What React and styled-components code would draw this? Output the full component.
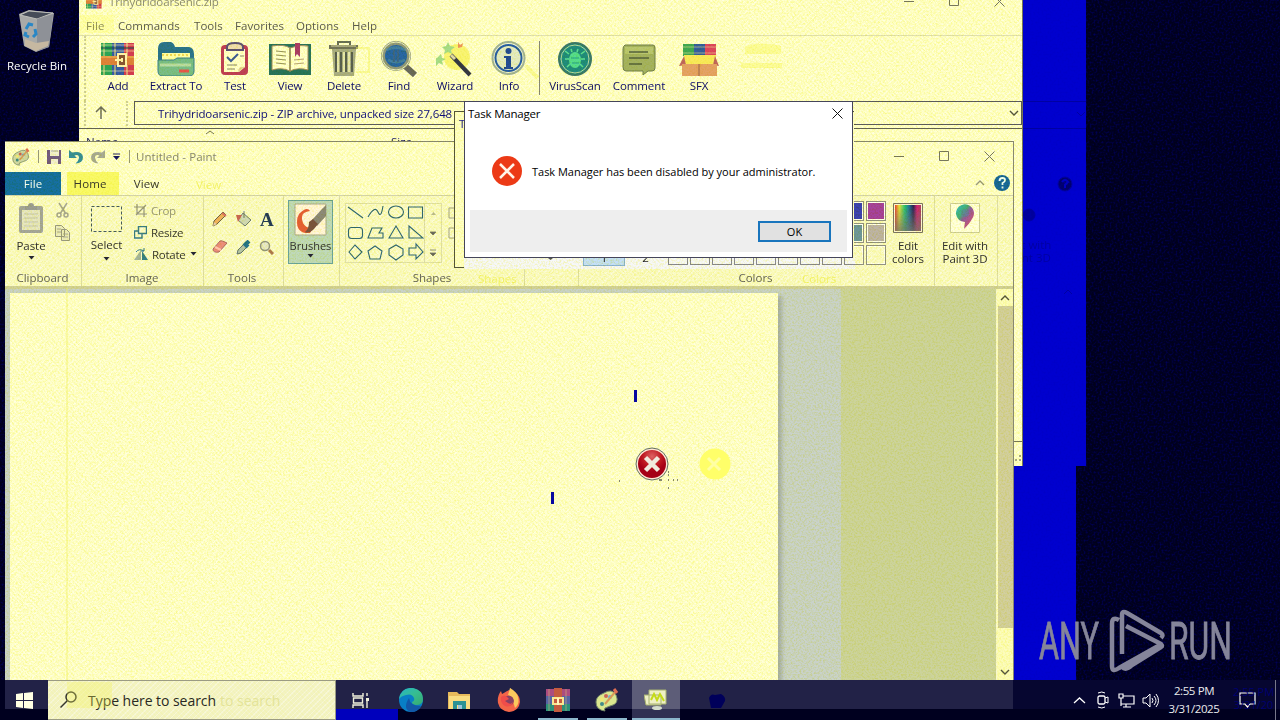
import React from "react";
import styled, { createGlobalStyle, css } from "styled-components";

const Global = createGlobalStyle`
  * { box-sizing: border-box; }
  html, body { margin: 0; padding: 0; overflow: hidden; background: #00001c; }
  body { font-family: "Open Sans", "Noto Sans", sans-serif; font-size: 11.5px; color: #30302c; }
`;

const dither = css`
  background-image:
    repeating-linear-gradient(45deg, rgba(240,240,90,.1) 0 1px, transparent 1px 3px),
    repeating-linear-gradient(-45deg, rgba(255,255,255,.35) 0 1px, transparent 1px 4px);
`;

const Desktop = styled.main`
  position: relative; width: 1280px; height: 720px; overflow: hidden;
  background-color: #00001c;
`;
const BlueTrail = styled.div`
  position: absolute; left: ${p => p.$x}px; top: ${p => p.$y}px;
  width: ${p => p.$w}px; height: ${p => p.$h}px; background: #0000cf;
`;
const Texture = styled.svg`
  position: absolute; left: 0; top: 0; pointer-events: none; mix-blend-mode: ${p => p.$blend || "normal"};
`;
const Ghost = styled.div`
  position: absolute; left: ${p => p.$x}px; top: ${p => p.$y}px; white-space: pre;
  line-height: 13px; text-align: center; color: ${p => p.$c || "#f3f36c"};
  font-size: ${p => p.$s || 11.5}px;
`;
const Patch = styled.div`
  position: absolute; left: ${p => p.$x}px; top: ${p => p.$y}px;
  width: ${p => p.$w}px; height: ${p => p.$h}px; background: ${p => p.$c};
`;
const DesktopIcon = styled.div`
  position: absolute; left: 4px; top: 8px; width: 66px; display: flex; flex-direction: column;
  align-items: center; gap: 5px; color: #fff; line-height: 14px; white-space: nowrap;
  font-size: 11.5px; letter-spacing: 0;
`;

/* Archive window */
const ArchiveWindow = styled.section`
  position: absolute; left: 79px; top: -14px; width: 944px; height: 480px;
  background-color: #ffffce; ${dither}
  display: flex; flex-direction: column; border-right: 1px solid #77775c;
`;
const ArchiveTitle = styled.header`
  height: 31px; display: flex; align-items: center; padding: 0 17px 1px 7px; gap: 7px; color: #8d8d78;
  letter-spacing: -.12px;
`;
const Spacer = styled.div`flex: 1;`;
const Caption = styled.div`display: flex; gap: 34px; align-items: center;`;
const Menu = styled.nav`height: 19px; display: flex; padding-left: 7px; line-height: 18px; border-bottom: 1px solid #e0e0b5; color: #5c5c50;`;
const MenuItem = styled.span`width: ${p => p.$w}px; letter-spacing: .05px; white-space: nowrap;`;
const Tools = styled.div`height: 65px; display: flex; margin-left: 5px; padding: 5px 0 0 3px; border-left: 2px dotted #d0d09e;`;
const Tool = styled.div`
  width: ${p => p.$w}px; display: flex; flex-direction: column; align-items: center; gap: 1px;
  color: #0c0c6c; line-height: 15px; white-space: nowrap; height: 60px; letter-spacing: -.1px;
`;
const ToolRule = styled.i`width: 1px; height: 54px; background: #88887a; margin: 0 0 0 6px;`;
const AddressRow = styled.div`height: 27px; display: flex; padding-left: 5px;`;
const UpButton = styled.div`
  width: 44px; height: 25px; margin-right: 6px; border-left: 2px dotted #d0d09e; border-right: 2px dotted #d0d09e;
  display: flex; align-items: center; padding: 0 0 2px 9px;
`;
const Address = styled.div`
  flex: 1; height: 24px; border: 1px solid #5b5b60; display: flex; align-items: center;
  justify-content: space-between; padding: 0 2px 0 23px; color: #101080; white-space: nowrap; letter-spacing: -.12px;
`;
const ListHead = styled.div`
  height: 14px; border-top: 1px solid #626258; display: flex; overflow: hidden; padding: 5px 0 0 7px;
  line-height: 15px; color: #222260;
`;
const Column = styled.span`width: ${p => p.$w}px;`;

/* Paint window */
const PaintWindow = styled.section`
  position: absolute; left: 5px; top: 141px; width: 1009px; height: 539px;
  background-color: #ffffce; ${dither}
  border: 1px solid #888871; border-left: 0; border-bottom: 0; display: flex; flex-direction: column;
`;
const PaintTitle = styled.header`
  height: 30px; display: flex; align-items: center; padding: 0 18px 1px 7px; color: #888874; letter-spacing: .05px;
`;
const Quick = styled.div`display: flex; align-items: center; width: 124px; gap: 8px; white-space: nowrap;`;
const PaintCaption = styled.div`display: flex; align-items: center; gap: 34px;`;
const Tabs = styled.nav`height: 23px; display: flex; align-items: stretch; line-height: 23px; letter-spacing: .1px;`;
const Tab = styled.div`
  width: ${p => p.$w}px; text-align: center; margin-right: ${p => p.$gap || 0}px;
  padding-right: ${p => p.$kind === "on" ? 6 : 0}px;
  background: ${p => p.$kind === "file" ? "#166fa5" : p.$kind === "on" ? "#f9f96a" : "transparent"};
  color: ${p => p.$kind === "file" ? "#f6ffff" : "#38382c"};
`;
const HelpRow = styled.div`display: flex; align-items: center; gap: 9px; padding: 0 3px 2px 0;`;
const Ribbon = styled.div`
  height: 94px; display: flex; background-color: #fafac8; ${dither}
  border-top: 1px solid #d3d3ae; border-bottom: 3px solid #d0d09c;
`;
const Group = styled.div`
  width: ${p => p.$w}px; padding-top: 3px; display: flex; flex-direction: column;
  border-right: 1px solid #dedeab; flex: none;
`;
const GroupBody = styled.div`height: 72px; display: flex; padding-left: ${p => p.$pad || 0}px;`;
const GroupName = styled.div`text-align: center; line-height: 14px; color: #65655a; white-space: nowrap; padding-right: ${p => p.$shift || 0}px;`;
const BigButton = styled.div`
  width: ${p => p.$w}px; display: flex; flex-direction: column; align-items: center; line-height: 13px;
  padding-top: ${p => p.$top || 0}px; gap: ${p => p.$gap || 4}px; white-space: pre-line; text-align: center; letter-spacing: -.05px;
`;
const Pair = styled.div`width: 24px; display: flex; flex-direction: column; gap: 7px; align-items: center; padding-top: 3px;`;
const SmallList = styled.div`display: flex; flex-direction: column; margin-left: 7px;`;
const Small = styled.div`height: 22px; display: flex; align-items: center; gap: 4px; color: ${p => p.$off ? "#98987d" : "#38382c"}; white-space: nowrap; letter-spacing: -.25px;`;
const ToolGrid = styled.div`display: grid; grid-template-columns: repeat(3, 23.5px); grid-auto-rows: 28px; padding-top: 6px; place-items: center;`;
const BrushButton = styled.div`
  width: 45px; height: 64px; margin-top: 1px; border: 1px solid #6aa3a5; background: #bfd9bc;
  display: flex; flex-direction: column; align-items: center; padding-top: 2px; line-height: 13px; gap: 2px; font-size: 11px;
`;
const ShapeBox = styled.div`width: 97px; height: 60px; margin-top: 4px; border: 1px solid #e0e0ac; display: flex;`;
const Palette = styled.div`display: grid; grid-template-columns: repeat(10, 22px); grid-auto-rows: 22px; margin-left: 2px; padding-top: 2px;`;
const Swatch = styled.i`width: 20px; height: 20px; border: 1px solid #929284; background: ${p => p.$c}; box-shadow: inset 0 0 0 1px #fffff0;`;
const ColorSlot = styled.div`width: 42px; height: 66px;`;
const Workspace = styled.div`flex: 1; display: flex; background: linear-gradient(90deg, #c9d2cb 0 836px, #ccd39e 836px);`;
const Canvas = styled.div`
  width: 768px; margin: 4px 0 0 5px; background-color: #ffffd2; ${dither} box-shadow: 4px 3px 4px #a8b0aa;
`;
const Scroll = styled.div`
  width: 17px; display: flex; flex-direction: column; align-items: center; background: #fcfcbd; border-left: 1px solid #f8f8ce;
`;
const ScrollEnd = styled.div`height: 17px; display: flex; align-items: center;`;
const Thumb = styled.div`height: 322px; width: 15px; background: #d2cfa0;`;

/* Dialogs */
const BackDialog = styled.div`
  position: absolute; left: 454px; top: 111px; width: 400px; height: 157px;
  border: 1px solid #56563c; border-right: 0; background: #ffffc9; padding: 4px 4px; color: #20208a; line-height: 15px;
`;
const RibbonStrip = styled.div`
  position: absolute; left: 464px; top: 258px; width: 391px; height: 11px; overflow: hidden;
  background: #f6f7fb; display: flex; align-items: flex-start; padding-left: 84px;
`;
const StripArrow = styled.i`width: 5px; height: 2px; flex: none; margin: 0 30px 0 0; background: #555; clip-path: polygon(0 0, 100% 0, 50% 100%);`;
const StripSlot = styled.div`
  width: ${p => p.$on ? 42 : 41}px; flex: none; height: 8px; border: 1px solid ${p => p.$on ? "#8ab3da" : "transparent"}; border-top: 0;
  background: ${p => p.$on ? "#c4dffa" : "transparent"}; display: flex; justify-content: center; line-height: 4px; color: #222; overflow: hidden;
`;
const StripDigit = styled.span`margin-top: -2px;`;
const StripSwatch = styled.i`width: 20px; height: 7px; margin-left: 2px; flex: none; border: 1px solid #898991; border-top: 0;`;
const Dialog = styled.section`
  position: absolute; left: 464px; top: 101px; width: 389px; height: 157px; background: #fff;
  border: 1px solid #45455a; color: #000; display: flex; flex-direction: column;
`;
const DialogTitle = styled.header`height: 24px; display: flex; justify-content: space-between; align-items: center; padding: 0 9px 1px 3px; letter-spacing: -.22px;`;
const DialogBody = styled.div`height: 84px; display: flex; align-items: center; padding: 5px 0 0 27px; gap: 10px; white-space: nowrap; font-size: 11px;`;
const DialogText = styled.span`padding-top: 1px; letter-spacing: -.02px;`;
const DialogFoot = styled.footer`margin: 0 5px; height: 42px; background: #eee; display: flex; justify-content: flex-end; padding: 11px 16px 0 0;`;
const Ok = styled.button`width: 73px; height: 21px; border: 2px solid #1975bd; background: #e1e1e1; font: 11px "Open Sans", sans-serif; padding: 0; color: #000;`;

/* Taskbar */
const Taskbar = styled.footer`
  position: absolute; left: 0; top: 680px; width: 1280px; height: 40px; display: flex;
  background: linear-gradient(90deg, transparent 0 336px, #0000bc 336px 398px, transparent 398px) 0 29px / 1280px 11px no-repeat,
    linear-gradient(90deg, #000020 0 5px, #222247 5px 1013px, #060630 1013px) 0 0 / 1280px 29px no-repeat, #00001f;
`;
const Start = styled.div`width: 48px; padding-left: 16px; display: flex; align-items: center;`;
const Search = styled.div`
  width: 288px; background-color: #f3f3c2; ${dither} border: 1px solid #9b9b83; border-left: 0;
  display: flex; align-items: center; gap: 10px; padding-left: 12px; font-size: 14px; color: #292922; letter-spacing: -.04px;
`;
const TaskItem = styled.div`
  width: ${p => p.$w || 49}px; display: flex; align-items: center; justify-content: center;
  background: ${p => p.$on ? "linear-gradient(#5d5d78 0 29px,#303052 29px)" : "transparent"};
  box-shadow: ${p => p.$run ? "inset 0 -2px #8cb7cc" : "none"};
  margin: 0 ${p => p.$m || 0}px;
`;
const Tray = styled.div`display: flex; align-items: center; gap: 7px; color: #ebebed;`;
const Clock = styled.div`width: 56px; text-align: center; line-height: 18px; font-size: 11.5px; margin: 0 10px 0 0; white-space: nowrap; letter-spacing: -.4px;`;
const ShowDesktop = styled.i`width: 1px; height: 40px; background: #77778b; margin-left: 19px;`;
const Gap = styled.div`width: 4px; flex: none;`;
const Watermark = styled.svg`position: absolute; left: 1036px; top: 608px;`;
const Overlay = styled.svg`position: absolute; left: ${p => p.$x}px; top: ${p => p.$y}px;`;

const Svg = ({ w = 16, h = w, v = `0 0 ${w} ${h}`, children }) => (
  <svg width={w} height={h} viewBox={v} fill="none" style={{ flexShrink: 0, display: "block" }}>{children}</svg>
);
const Chevron = ({ up, c = "#55553e", w = 10 }) => <Svg w={w} h={6} v="0 0 10 6"><path d={up ? "M1 5 5 1 9 5" : "M1 1 5 5 9 1"} stroke={c} strokeWidth="1.4" /></Svg>;
const Arrow = () => <Svg w={7} h={4}><path d="M.5 0h6L3.5 3.5z" fill="#252535" /></Svg>;
const QuickArrow = () => <Svg w={8} h={8}><path d="M0 1h7" stroke="#252565" /><path d="M0 3h7L3.500 7z" fill="#151565" /></Svg>;
const Divider = () => <Svg w={1} h={13}><path d="M0 0h1v13H0z" fill="#999981" /></Svg>;
const Min = ({ c = "#777760" }) => <Svg w={11}><path d="M0 5.5h10" stroke={c} /></Svg>;
const Max = ({ c = "#777760" }) => <Svg w={11}><path d="M.5.5h9v9h-9z" stroke={c} /></Svg>;
const Close = ({ c = "#77776a" }) => <Svg w={11}><path d="m.5.5 10 10m0-10-10 10" stroke={c} /></Svg>;

const Books = ({ w = 34 }) => (
  <Svg w={w} v="0 0 34 34">
    <path d="M0 1h11v32H0z" fill="#2da45b" /><path d="M11 1h12v32H11z" fill="#365cae" /><path d="M23 1h10v32H23z" fill="#d33c55" />
    <path d="M3 1v32M14 1v32M26 1v32" stroke="#e5d98b" strokeWidth="2" opacity=".55" />
    <path d="M0 3h33M0 9h33M0 29h33" stroke="#fff5b7" opacity=".6" /><path d="M0 6h33" stroke="#164450" opacity=".5" strokeWidth="2" />
    <path d="M0 14h33v9H0z" fill="#dd823c" /><path d="M0 15h33" stroke="#f4bf63" /><rect x="17" y="12" width="8" height="12" stroke="#fff3b0" strokeWidth="2" fill="#885533" />
    <path d="M14 18h7M21 16v4" stroke="#fff3b0" strokeWidth="2" />
  </Svg>
);
const Folder = () => <Svg w={38} h={34}><path d="M1 7q0-7 6-7h7q3 1 4 5h14q5 1 5 7v15H1z" fill="#2a7391" /><path d="M5 11h28v10H5z" fill="#ffffab" /><path d="M5 13h28" stroke="#f1d95a" strokeDasharray="2 2" strokeWidth="2" /><path d="M1 18h16l3-2h17v13q0 5-5 5H6q-5 0-5-5z" fill="#79bd8b" stroke="#3b8090" /><path d="M3 23h31" stroke="#b9dcab" strokeWidth="3" /><path d="M22 29h10" stroke="#e4574e" strokeWidth="3" /></Svg>;
const Clipboard = () => <Svg w={30} h={34}><rect x="1" y="3" width="27" height="30" rx="4" fill="#be4058" /><path d="M4 7h21v18l-6 5H4z" fill="#ffffce" /><path d="M18 30q0-6 7-5" fill="#e2d290" /><path d="M7 5q0-4 8-4t8 4v3H7z" stroke="#5c5279" strokeWidth="2" fill="#eeddb0" /><path d="m7 15 4 4 7-7" stroke="#3d5c9c" strokeWidth="2" /><path d="M7 23h10m-10 4h8m5-13h4" stroke="#89866c" /></Svg>;
const Book = () => <Svg w={44} h={34}><rect x="1" y="2" width="42" height="31" fill="#29745e" /><path d="M4 4q12-2 18 2v23q-8-4-18-1zm18 2q10-4 18-2v24q-10-3-18 1z" fill="#ffffd1" stroke="#a28d60" /><path d="M22 6v24M8 9l10 1M8 13l10 1M8 17l10 1M8 21l10 1" stroke="#95915c" /><path d="M27 1h5v14l-3-3-2 3z" fill="#aa3e69" /><path d="m26 18 10-1m-10 5 10-1" stroke="#b7a376" /></Svg>;
const Trash = ({ desk }) => desk ? (
  <Svg w={40} h={46}><path d="m2 6 10-4 25 3-5 34-13 5L7 38z" fill="#a9aaa8" /><path d="m3 7 17 4 16-6-24-2z" fill="#464c58" stroke="#bfc0ba" /><path d="m20 11 16-5-4 33-12 4z" fill="#8e9197" /><path d="m8 31 11 4 13-2-1 5-12 5-11-5z" fill="#c6b8a1" /><path d="m9 21 3-5 4 1m2 4 1 5-3 3m-4 0-4-2 1-3" stroke="#2a87c6" strokeWidth="3" /></Svg>
) : <Svg w={32} h={36}><path d="M10 4V1h12v3" stroke="#68705a" strokeWidth="2" /><rect x="1" y="4" width="29" height="4" fill="#70735b" /><path d="M4 8h24l-2 27H6z" fill="#a9ad88" /><path d="M8 11v20m5-20v20m5-20v20m6-20v20" stroke="#596052" strokeWidth="2" /><path d="M10 11v20m6-20v20m5-20v20" stroke="#e6e6b1" strokeWidth="2" /><path d="M3 5h25" stroke="#ddddb0" /></Svg>;
const Lens = () => <Svg w={38} h={36}><path d="m25 25 10 9" stroke="#686960" strokeWidth="6" /><circle cx="16" cy="15" r="13" fill="#2866a7" stroke="#90977f" strokeWidth="4" /><circle cx="16" cy="15" r="14" stroke="#ebefbb" strokeWidth="1" /><path d="M6 9q10-5 20 0M8 19q8 4 17 0" stroke="#5690aa" strokeWidth="3" opacity=".6" /><path d="M14 9v12m4-12v12" stroke="#3c668e" strokeWidth="2" /></Svg>;
const Wand = () => <Svg w={38} h={36}><circle cx="21" cy="16" r="13" fill="#f9f476" /><path d="m15 14 19 20" stroke="#343746" strokeWidth="4" /><path d="m15 14 4 4" stroke="#ddd6ac" strokeWidth="3" /><path d="m12 1 2 4 5 1-4 3 1 4-4-2-4 2 1-4-3-3 4-1zM5 13l1 4 4 1-4 2 1 4-4-2-3 3v-5l-3-2 4-1z" fill="#a7dc8c" /><path d="m22 1 2 3 3-2-1 4-4 1z" fill="#ed9661" /></Svg>;
const Info = () => <Svg w={36} h={36}><circle cx="17.5" cy="17" r="16" fill="#f5f8dd" stroke="#a2b39b" strokeWidth="2" /><circle cx="17.5" cy="17" r="13" fill="#e4ebc9" stroke="#285eaa" strokeWidth="2" /><circle cx="17.5" cy="10" r="3" fill="#234c9a" /><path d="M13 15h7v11h2v2h-9v-2h2v-9h-2z" fill="#234c9a" /></Svg>;
const Virus = () => <Svg w={36} h={36}><circle cx="18" cy="18" r="16" fill="#208c81" stroke="#3b786c" strokeWidth="2" /><circle cx="18" cy="18" r="14" stroke="#bad9a7" /><ellipse cx="18" cy="19" rx="6" ry="8" fill="#55dc91" /><path d="m12 13-4-3m4 8H8m5 5-3 3m14-13 4-3m-4 8h4m-5 5 3 3M15 11l-1-3m6 3 1-3" stroke="#60df9a" strokeWidth="1.500" /><path d="M14 17h8m-7 5h7" stroke="#269f8e" /></Svg>;
const CommentIcon = () => <Svg w={36} h={34}><path d="M4 3h28q2 0 2 3v20q0 3-3 3h-4l-5 4v-4H5q-3 0-3-4V7q0-3 2-4z" fill="#a4b263" stroke="#707e4c" /><path d="M4 5h28v7H4z" fill="#c8d480" opacity=".6" /><path d="M8 10h19m-19 6h20M8 22h13" stroke="#54623e" strokeWidth="1.500" /></Svg>;
const Box = () => <Svg w={42} h={35}><path d="M5 2h11v12H5z" fill="#40a857" /><path d="M16 2h11v12H16z" fill="#345ea4" /><path d="M27 2h11v12H27z" fill="#dc4761" /><path d="M5 5h33m-33 6h33" stroke="#eee691" opacity=".55" /><path d="M6 13h32v9H6z" fill="#f8e95e" /><path d="m6 14-5 10 7-1zm31 0 4 10-6-1z" fill="#c06760" /><path d="M4 22h35v12H4z" fill="#e4a268" /><path d="M21 22v12" stroke="#9b6443" /></Svg>;

const PaletteIcon = ({ w = 18, c = "#cfd7a3" }) => <Svg w={w} v="0 0 24 24"><path d="M9 5q8-5 12 2 4 9-6 11l-5 2q-1 2 0 3Q1 22 1 14q0-6 8-9z" fill={c} stroke="#75876a" /><circle cx="7" cy="11" r="2" fill="#f1e775" /><circle cx="11" cy="8" r="2" fill="#cb6657" /><circle cx="15" cy="9" r="2" fill="#78aed3" /><circle cx="7" cy="16" r="2" fill="#438b8a" /><path d="m10 16 11-13" stroke="#d79b59" strokeWidth="2" /><path d="m19 1 3 4" stroke="#de6e53" strokeWidth="3" /></Svg>;
const Save = () => <Svg w={14}><path d="M0 0h14v14H0z" fill="#735c86" /><path d="M3 0h9v6H3zM4 9h7v5H4z" fill="#f1eed4" /><path d="M4 1h7" stroke="#aaa" /></Svg>;
const Undo = ({ flip, c }) => <svg width="14" height="14" viewBox="0 0 14 14" fill="none" style={{ transform: flip ? "scaleX(-1)" : undefined, flexShrink: 0 }}><path d="M0 0v8h8L5.500 5.500Q10 4 10 8q-.5 3-3.500 5.500Q14 13 14 7q-1-6.500-11-4.500z" fill={c} /></svg>;
const Paste = () => <Svg w={26} h={32}><rect x="1" y="3" width="24" height="27" rx="2" fill="#a4a6a0" /><path d="M4 7h18v20H4z" fill="#e6e6c5" /><path d="M7 3h3q0-3 3-3t3 3h3v4H7z" fill="#9b9d97" /><path d="M6 11h14M6 15h14M6 19h14M6 23h14" stroke="#c6c7b5" /></Svg>;
const Cut = () => <Svg w={14} h={16}><path d="m3 1 7 11M11 1 4 12" stroke="#a6a691" strokeWidth="1.5" /><circle cx="3" cy="13" r="2" stroke="#a6a691" strokeWidth="1.5" /><circle cx="10" cy="13" r="2" stroke="#a6a691" strokeWidth="1.5" /></Svg>;
const Copy = () => <Svg w={16} h={17}><path d="M.5.5h6l3 3v8h-9zM6.5 4.5h5l3 3v8h-8z" fill="#ececc0" stroke="#999983" /><path d="M2 4h4M2 7h4m2 2h5m-5 3h5" stroke="#aaaa91" /></Svg>;
const Crop = () => <Svg w={13}><path d="M3 0v10h10M0 3h10v10M2 11 12 1" stroke="#969681" strokeWidth="1.2" /></Svg>;
const Resize = () => <Svg w={13}><path d="M4.5.5h8v7h-8zM4 5H.5v7H8V8" stroke="#397c8d" strokeWidth="1.4" /></Svg>;
const Rotate = () => <Svg w={14} h={13}><path d="M7 2v10H0z" fill="#a4b59f" /><path d="m8 3 6 9H8z" fill="#357f89" /><path d="M2 4q3-4 8-1m0 0V0m0 3H7" stroke="#347c91" /></Svg>;
const Pencil = () => <Svg w={15}><path d="m1 14 1-5L11 0l3 3-9 9z" fill="#efb25e" stroke="#706447" /><path d="m1 14 1-4 3 2z" fill="#e7caaa" /><path d="m10 1 4 3" stroke="#da7468" strokeWidth="2" /></Svg>;
const Bucket = () => <Svg w={17} h={16}><path d="m8 2 8 7-6 6-7-6z" fill="#d0d8b9" stroke="#727e72" /><path d="M9 0v7" stroke="#727e72" /><path d="m1 4 6 0-4 7z" fill="#c96855" /></Svg>;
const Eraser = () => <Svg w={16} h={14}><path d="m1 9 7-8q1-1 7 2l-8 9q-6 1-6-3z" fill="#eb8e82" stroke="#ae6a66" /><path d="m3 7 6 3" stroke="#ffc6af" strokeWidth="2" /></Svg>;
const Dropper = () => <Svg w={15}><path d="m1 14 1-4 7-7 3 3-7 7z" fill="#b5c5ad" stroke="#65766f" /><path d="m8 3 4 4m-2-3 3-3" stroke="#24748e" strokeWidth="4" /></Svg>;
const Magnifier = () => <Svg w={15}><circle cx="6" cy="6" r="4.5" fill="#e7e9cb" stroke="#93957f" strokeWidth="1.5" /><path d="m10 10 4 4" stroke="#ad794f" strokeWidth="3" /></Svg>;
const Brush = () => <Svg w={34}><path d="M1 1h31v31H1z" fill="#fff5de" stroke="#abaa90" /><path d="M5 11Q13 3 16 8 5 9 9 20q3 6 10 5l-3 5Q3 31 3 19q0-5 2-8z" fill="#e46035" /><path d="m18 17 10-11 4-4v11l-9 10z" fill="#8c897a" /><path d="m15 19 4-3 5 5-4 5q-5 5-9 3 4-3 4-10z" fill="#79543e" /></Svg>;
const Shapes = () => <Svg w={78} h={57}>
  <g stroke="#2f6777" strokeWidth="1.1"><path d="m2 3 15 11M22 13q7-12 10-5t5-6" /><ellipse cx="50" cy="8" rx="7.5" ry="6" /><path d="M62.500 3h14v11h-14z" /><rect x="2.500" y="23.500" width="14" height="11" rx="3" /><path d="M22 34 26 24h10l-3 5h4v5zM43 34l7-12 7 12zM63 22v12h14zM3 48l6-7 7 7-7 7zM22 47l7-5 7 5-2 8H24zM43 45l7-4 7 4v6l-7 5-7-5zM63 44h7v-4l7 8-7 7v-4h-7z" /></g>
</Svg>;
const Spectrum = () => <Svg w={30}><defs><linearGradient id="hue"><stop stopColor="#ef3f35" /><stop offset=".16" stopColor="#e9e638" /><stop offset=".38" stopColor="#24c47a" /><stop offset=".55" stopColor="#206f9e" /><stop offset=".7" stopColor="#292052" /><stop offset=".85" stopColor="#db1e76" /><stop offset="1" stopColor="#b13d66" /></linearGradient><linearGradient id="hueFade" x2="0" y2="1"><stop stopColor="#777" stopOpacity="0" /><stop offset="1" stopColor="#77776e" stopOpacity=".8" /></linearGradient></defs><path d="M.5.5h29v29H.5z" fill="#fff6d9" stroke="#7a7465" /><path d="M2 2h26v26H2z" fill="url(#hue)" /><path d="M2 2h26v26H2z" fill="url(#hueFade)" /></Svg>;
const Pin = () => <Svg w={30}><defs><linearGradient id="pinHue" x2="1" y2="1"><stop stopColor="#33bdd3" /><stop offset=".35" stopColor="#46ae75" /><stop offset=".5" stopColor="#905da4" /><stop offset="1" stopColor="#ef4e60" /></linearGradient></defs><path d="M.5.5h29v29H.5z" fill="#ffffe0" stroke="#cece9d" /><path d="M6 11a9 9 0 1 1 16 5q-2 4-8 10l1-7q-8-1-9-8z" fill="url(#pinHue)" /><circle cx="15" cy="10" r="4" fill="#5c84a2" opacity=".6" /></Svg>;
const Help = () => <Svg w={16}><circle cx="8" cy="8" r="8" fill="#17679d" /><path d="M5.500 6q0-3 3-3 2.500 0 2.500 2.200Q11 7 8.500 8v2m0 1.500v2" stroke="#efffff" strokeWidth="1.8" /></Svg>;
const ErrorIcon = () => <Svg w={30}><circle cx="15" cy="15" r="15" fill="#ec3a16" /><path d="m8 8 14 14m0-14L8 22" stroke="#fff4e8" strokeWidth="2.500" /></Svg>;

const Edge = () => <Svg w={24}><defs><linearGradient id="edgeFill" x2="1" y2="1"><stop stopColor="#26b4c7" /><stop offset=".5" stopColor="#36bd91" /><stop offset="1" stopColor="#36aa70" /></linearGradient></defs><circle cx="12" cy="12" r="12" fill="#087fc6" /><path d="M0 11Q2-1 14 0q10 2 10 11 0 6-7 6-4 0-4-3 3-1 2-4-2-5-8-3-5 1-7 4z" fill="url(#edgeFill)" /><path d="M10 10q1 8 12 8-3 6-10 6-9-3-2-14z" fill="#1258a8" /></Svg>;
const Files = () => <Svg w={23} h={20}><path d="M0 2h9l2 2h11v15H0z" fill="#e6b95b" /><path d="M1 6h21v13H1z" fill="#f8dc81" /><path d="M5 19v-8h13v8h-4v-4H9v4z" fill="#2a9295" /><path d="M10 15h4v4h-4z" fill="#9ac4dc" /></Svg>;
const Firefox = () => <Svg w={24}><path d="M12 2q4 2 5 5l1-3q5 4 5 10-1 9-11 10Q3 23 1 15 0 8 4 3l1 3q5-3 7-4z" fill="#f36549" /><path d="M13 0q7 4 8 9 2 7-3 11l-3-10q-2-3-4-3z" fill="#fac95d" /><path d="M10 8q6-1 7 5-1 6-8 4-5-3-2-8z" fill="#894164" /><path d="M4 9q4-4 8 2l-4 2 3 2q3 2 5-1-2 6-8 4-5-3-4-9z" fill="#f04d4a" /></Svg>;
const Rar = () => <Svg w={24}><path d="M0 1h24v7H0z" fill="#ab4c80" /><path d="M0 8h24v8H0z" fill="#5565a4" /><path d="M0 16h24v7H0z" fill="#2c917a" /><path d="M8 0h8v24H8z" fill="#c45b3f" /><path d="M3 1v22M20 1v22" stroke="#d6b776" opacity=".6" /><path d="M7 10h10v6H7z" stroke="#f9e793" strokeWidth="2" /><path d="M12 10v7" stroke="#fff4bf" strokeWidth="2" /></Svg>;
const Monitor = () => <Svg w={24} h={22}><path d="M0 6h17v10H2zM5 1h17v14H5z" fill="#eff0c5" stroke="#a7b26f" /><path d="m7 11 3-6 3 6 3-6 4 7" stroke="#c4da18" strokeWidth="2" /><ellipse cx="13" cy="19" rx="5" ry="2" fill="#d5ddcd" /></Svg>;

const strip = Array.from({ length: 9 });
const toolbar = [
  ["Add", 58, Books], ["Extract To", 58, Folder], ["Test", 60, Clipboard], ["View", 50, Book], ["Delete", 58, Trash],
  ["Find", 52, Lens], ["Wizard", 60, Wand], ["Info", 48, Info], ["VirusScan", 70, Virus], ["Comment", 58, CommentIcon], ["SFX", 62, Box],
];
const IconCell = styled.div`height: 36px; display: flex; align-items: center;`;
const Cell = ({ item: [name, w, Icon] }) => <Tool $w={w}><IconCell><Icon /></IconCell>{name}</Tool>;

function Archive() {
  return <ArchiveWindow>
    <ArchiveTitle><Books w={16} />Trihydridoarsenic.zip<Spacer /><Caption><Min /><Max /><Close /></Caption></ArchiveTitle>
    <Menu>{[["File", 32], ["Commands", 76], ["Tools", 41], ["Favorites", 61], ["Options", 56], ["Help", 40]].map(([n, w]) => <MenuItem key={n} $w={w}>{n}</MenuItem>)}</Menu>
    <Tools>{toolbar.slice(0, 8).map(i => <Cell key={i[0]} item={i} />)}<ToolRule />{toolbar.slice(8).map(i => <Cell key={i[0]} item={i} />)}</Tools>
    <AddressRow><UpButton><Svg w={12} h={13}><path d="M6 13V1M1 6l5-5 5 5" stroke="#6e6e5c" strokeWidth="1.5" /></Svg></UpButton><Address>Trihydridoarsenic.zip - ZIP archive, unpacked size 27,648<Chevron /></Address></AddressRow>
    <ListHead><Column $w={305}>Name</Column><Column $w={80}>Size</Column></ListHead>
  </ArchiveWindow>;
}

function Paint() {
  return <PaintWindow>
    <PaintTitle><Quick><PaletteIcon /><Divider /><Save /><Undo c="#378f9c" /><Undo flip c="#a7aa98" /><QuickArrow /><Divider /></Quick><span>Untitled - Paint</span><Spacer /><PaintCaption><Min /><Max /><Close /></PaintCaption></PaintTitle>
    <Tabs><Tab $kind="file" $w={56} $gap={6}>File</Tab><Tab $kind="on" $w={52}>Home</Tab><Tab $w={55}>View</Tab><Spacer /><HelpRow><Chevron up c="#99997f" /><Help /></HelpRow></Tabs>
    <Ribbon>
      <Group $w={77}><GroupBody $pad={6}><BigButton $w={40} $top={4} $gap={4}><Paste /><span>Paste</span><Arrow /></BigButton><Pair><Cut /><Copy /></Pair></GroupBody><GroupName $shift={1}>Clipboard</GroupName></Group>
      <Group $w={122}><GroupBody $pad={4}><BigButton $w={41} $top={7} $gap={6}><Svg w={31} h={26}><path d="M.5.5h30v25H.5z" stroke="#455b61" strokeDasharray="3 2" /></Svg><span>Select</span><Arrow /></BigButton><SmallList><Small $off><Crop />Crop</Small><Small><Resize />Resize</Small><Small><Rotate />Rotate<Arrow /></Small></SmallList></GroupBody><GroupName $shift={1}>Image</GroupName></Group>
      <Group $w={80}><GroupBody $pad={4}><ToolGrid><Pencil /><Bucket /><Svg w={15}><text x="1" y="14" fontFamily="Liberation Serif" fontWeight="bold" fontSize="19" fill="#253c58">A</text></Svg><Eraser /><Dropper /><Magnifier /></ToolGrid></GroupBody><GroupName $shift={3}>Tools</GroupName></Group>
      <Group $w={56}><GroupBody $pad={4}><BrushButton><Brush /><span>Brushes</span><Arrow /></BrushButton></GroupBody></Group>
      <Group $w={185}><GroupBody $pad={5}><ShapeBox><Shapes /><Svg w={18} h={58}><path d="M.5 0v58" stroke="#deddb2" /><path d="M7 11h5L9.500 8z" fill="#bbbb9a" /><path d="M6 28h6l-3 3zM6 46h6m-6 3h6l-3 3z" fill="#66665e" stroke="#77776b" strokeWidth=".8" /></Svg></ShapeBox><Svg w={20} h={44}><path d="M7 9h10v10H7zM7 29h10v10H7z" stroke="#a4a48c" /></Svg></GroupBody><GroupName>Shapes</GroupName></Group>
      <Group $w={54} />
      <Group $w={356}><GroupBody $pad={3}><ColorSlot /><ColorSlot /><Palette>{[..."abcdefgh", "#3c42b5", "#a543a0", ..."abcdefgh", "#6d969d", "#bdb4a9", ..."abcdefghij"].map((c, i) => <Swatch key={i} $c={c.length > 1 ? c : "transparent"} />)}</Palette><BigButton $w={40} $top={4} $gap={6}><Spectrum />{"Edit\ncolors"}</BigButton></GroupBody><GroupName $shift={2}>Colors</GroupName></Group>
      <Group $w={63}><GroupBody><BigButton $w={60} $top={4} $gap={6}><Pin />{"Edit with\nPaint 3D"}</BigButton></GroupBody></Group>
    </Ribbon>
    <Workspace><Canvas /><Spacer /><Scroll><ScrollEnd><Chevron up /></ScrollEnd><Thumb /><Spacer /><ScrollEnd><Chevron /></ScrollEnd></Scroll></Workspace>
  </PaintWindow>;
}

export default function App() {
  return <Desktop><Global />
    <BlueTrail $x={1023} $y={0} $w={63} $h={466} /><BlueTrail $x={1013} $y={466} $w={63} $h={214} />
    <Overlay $x={1023} $y={90} width="64" height="220"><g stroke="#0000a0" fill="none"><path d="M0 11.500h63M0 38.500h63M54 22l4 4 4-4M41 204l4-4 4 4" /><circle cx="42" cy="94" r="7" fill="#00006c" /><circle cx="6" cy="125" r="6" fill="#00009a" /></g><path d="M39 92q3-4 6 0l-3 3v3" stroke="#0000c0" strokeWidth="2" fill="none" /></Overlay>
    <Ghost $x={1005} $y={238} $c="#0000a0">{"Edit with\nPaint 3D"}</Ghost>
    <Archive />
    <Overlay $x={205} $y={129} width="10" height="8"><path d="m1 5 4-3 4 3" fill="none" stroke="#77775c" /></Overlay>
    <Overlay $x={1012} $y={441} width="11" height="25"><path d="M0 .5h11" stroke="#77775b" /><path d="M7 14h2v2H7zM3 18h2v2H3zm4 0h2v2H7z" fill="#aaaa86" /></Overlay>
    <Overlay $x={740} $y={35} width="50" height="45"><path d="M5 11q18-5 36 0v8H5zM1 28h41v5H1z" fill="#f9f96b" opacity=".5" /></Overlay>
    <Overlay $x={130} $y={20} width="530" height="65"><g stroke="#f4f45d" opacity=".45" fill="none"><path d="M226 28h13v24h-13" strokeWidth="2" /><path d="m396 46 12 12" strokeWidth="4" /></g></Overlay>
    <Patch $x={80} $y={15} $w={34} $h={18} $c="#ffff7050" />
    <Paint />
    <Patch $x={66} $y={288} $w={2} $h={392} $c="#f3f36d66" />
    <Ghost $x={196} $y={178}>View</Ghost><Ghost $x={478} $y={272}>Shapes</Ghost><Ghost $x={802} $y={272}>Colors</Ghost>
    <BackDialog>T</BackDialog>
    <RibbonStrip><StripArrow /><StripSlot $on><StripDigit>1</StripDigit></StripSlot><StripSlot><StripDigit>2</StripDigit></StripSlot>{strip.map((_, i) => <StripSwatch key={i} />)}</RibbonStrip>
    <Texture $blend="multiply" width="1280" height="720">
      <defs>
        <filter id="yellowGrain" x="0" y="0" width="1" height="1" colorInterpolationFilters="sRGB"><feTurbulence type="fractalNoise" baseFrequency=".55" numOctaves="3" seed="7" /><feColorMatrix values="0 0 0 0 .97 0 0 0 0 .97 0 0 0 0 .5 2.400 0 0 0 -.95" /></filter>
      </defs>
      <clipPath id="archiveArea"><path d="M79 0h944v466h-9V141H79z" /></clipPath>
      <g opacity=".6"><g clipPath="url(#archiveArea)"><path d="M79 0h944v466H79z" filter="url(#yellowGrain)" /></g><path d="M5 141h1008v539H5z" filter="url(#yellowGrain)" /></g>
    </Texture>
    <Overlay $x={540} $y={380} width="210" height="130">
      <path d="M94 10h3v12h-3zM11 112h3v12h-3z" fill="#0808a0" />
      <defs><radialGradient id="stopRed" cy=".25"><stop stopColor="#dd6262" /><stop offset=".65" stopColor="#bd1720" /><stop offset="1" stopColor="#a50016" /></radialGradient></defs>
      <circle cx="112" cy="84" r="15" fill="url(#stopRed)" stroke="#ffe6d4" strokeWidth="2" /><circle cx="112" cy="84" r="16" fill="none" stroke="#617061" />
      <path d="m105.500 77.500 13 13m0-13-13 13" stroke="#f0ebde" strokeWidth="4.500" />
      <circle cx="175" cy="84" r="15.500" fill="#ffff69" /><path d="m168 78 12 12m0-12-12 12" stroke="#ffffa4" strokeWidth="3" />
      <path d="M79 101h1M119 100h3m6 0h1m4 0h1m3 0h1M128 92h1m-1 3h1m-1 13h1" stroke="#111" />
    </Overlay>
    <Texture width="1280" height="720">
      <defs>
        <filter id="blueGrain" x="0" y="0" width="1" height="1"><feTurbulence type="fractalNoise" baseFrequency=".5" numOctaves="2" seed="12" /><feColorMatrix values="0 0 0 0 0 0 0 0 0 0 0 0 0 0 .48 2.300 0 0 0 -1.020" /></filter>
        <clipPath id="rightSide"><path d="M1023 0h257v720h-266V466h9z" /></clipPath>
      </defs>
      <g opacity=".42"><path d="M0 0h79v141H0z" filter="url(#blueGrain)" /><path d="M0 141h5v579H0z" filter="url(#blueGrain)" /><g clipPath="url(#rightSide)"><path d="M1013 0h267v720h-267z" filter="url(#blueGrain)" /></g></g>
    </Texture>
    <DesktopIcon><Trash desk /><span>Recycle Bin</span></DesktopIcon>
    <Dialog><DialogTitle>Task Manager<Close c="#111" /></DialogTitle><DialogBody><ErrorIcon /><DialogText>Task Manager has been disabled by your administrator.</DialogText></DialogBody><DialogFoot><Ok>OK</Ok></DialogFoot></Dialog>
    <Watermark width="200" height="66"><g fill="#85859a" stroke="#85859a" strokeWidth=".8"><text x="3" y="51" fontFamily="Roboto" fontSize="51" textLength="60" lengthAdjust="spacingAndGlyphs">ANY</text><text x="133" y="51" fontFamily="Roboto" fontSize="51" textLength="63" lengthAdjust="spacingAndGlyphs">RUN</text></g><path d="M83 12q-7-4-7 4v42q0 7 7 2l41-23M86 46V7q0-5 5-2l34 20q3 2 0 5M90 18l35 18q2 2 0 3L96 57q-6 6-10 2" stroke="#85859a" strokeWidth="4.500" fill="none" strokeLinejoin="round" /></Watermark>
    <Taskbar>
      <Start><Svg w={17}><path d="M0 2 7 1v7H0zM8 1l9-1v8H8zM0 9h7v7l-7-1zM8 9h9v8l-9-1z" fill="#ffffe3" /></Svg></Start>
      <Search><Svg w={18}><circle cx="11" cy="6" r="5" stroke="#33332f" strokeWidth="1.500" /><path d="m7.500 9.500-7 7" stroke="#33332f" strokeWidth="1.500" /></Svg>Type here to search</Search>
      <TaskItem $w={50}><Svg w={18} h={17}><path d="M1 1v3h10V1M1.500 6v5h9V6zM1 16v-3h10v3M15 1v3m0 4v8" stroke="#f1f1db" strokeWidth="1.400" /><path d="M14 6h3v3h-3z" fill="#f1f1db" /></Svg></TaskItem>
      <TaskItem><Edge /></TaskItem><TaskItem><Files /></TaskItem><TaskItem><Firefox /></TaskItem>
      <TaskItem $w={40} $m={4.500} $run><Rar /></TaskItem><TaskItem $w={40} $m={5} $run><PaletteIcon w={24} c="#dae78f" /></TaskItem><TaskItem $w={48} $run $on><Monitor /></TaskItem>
      <Spacer />
      <Tray><Svg w={13} h={8}><path d="m1 7 5.500-5L12 7" stroke="#fff" strokeWidth="1.300" /></Svg><Svg w={18} h={18}><rect x="5" y="5" width="7" height="8" rx="1.500" stroke="#fff" strokeWidth="1.300" /><path d="m12 7 3-1v6l-3-1M5 2q4-2 7 0M5 16q4 2 7 0" stroke="#fff" /></Svg><Svg w={17} h={15}><path d="M5 3h11v8H3V7m5 4v3m-3 0h8M1 1h4v4H1zM3 5v8" stroke="#fff" strokeWidth="1.200" /></Svg><Svg w={17} h={15}><path d="M1 5h3l4-4v13l-4-4H1zM10 5q2 2.500 0 5m2-7q4 4.500 0 9m2-11q5 6.500 0 13" stroke="#fff" /></Svg><Clock>2:55 PM<br />3/31/2025</Clock><Svg w={17} h={17}><path d="M1 1h15v11h-5l-2.500 3L6 12H1z" stroke="#fff" strokeWidth="1.200" /></Svg></Tray><ShowDesktop />
      <Gap />
    </Taskbar>
    <Patch $x={67} $y={682} $w={45} $h={26} $c="#f3f35650" />
    <Ghost $x={220} $y={694} $s={14} $c="#e3e398">to search</Ghost>
    <Overlay $x={704} $y={689} width="30" height="24"><path d="M5 9q2-5 6-3l6-1q5 3 4 7l-4 7H7z" fill="#00005a" /></Overlay>
    <Ghost $x={1233} $y={685} $s={11} $c="#000070">{"2:55 PM\n3/31/20"}</Ghost>
  </Desktop>;
}
